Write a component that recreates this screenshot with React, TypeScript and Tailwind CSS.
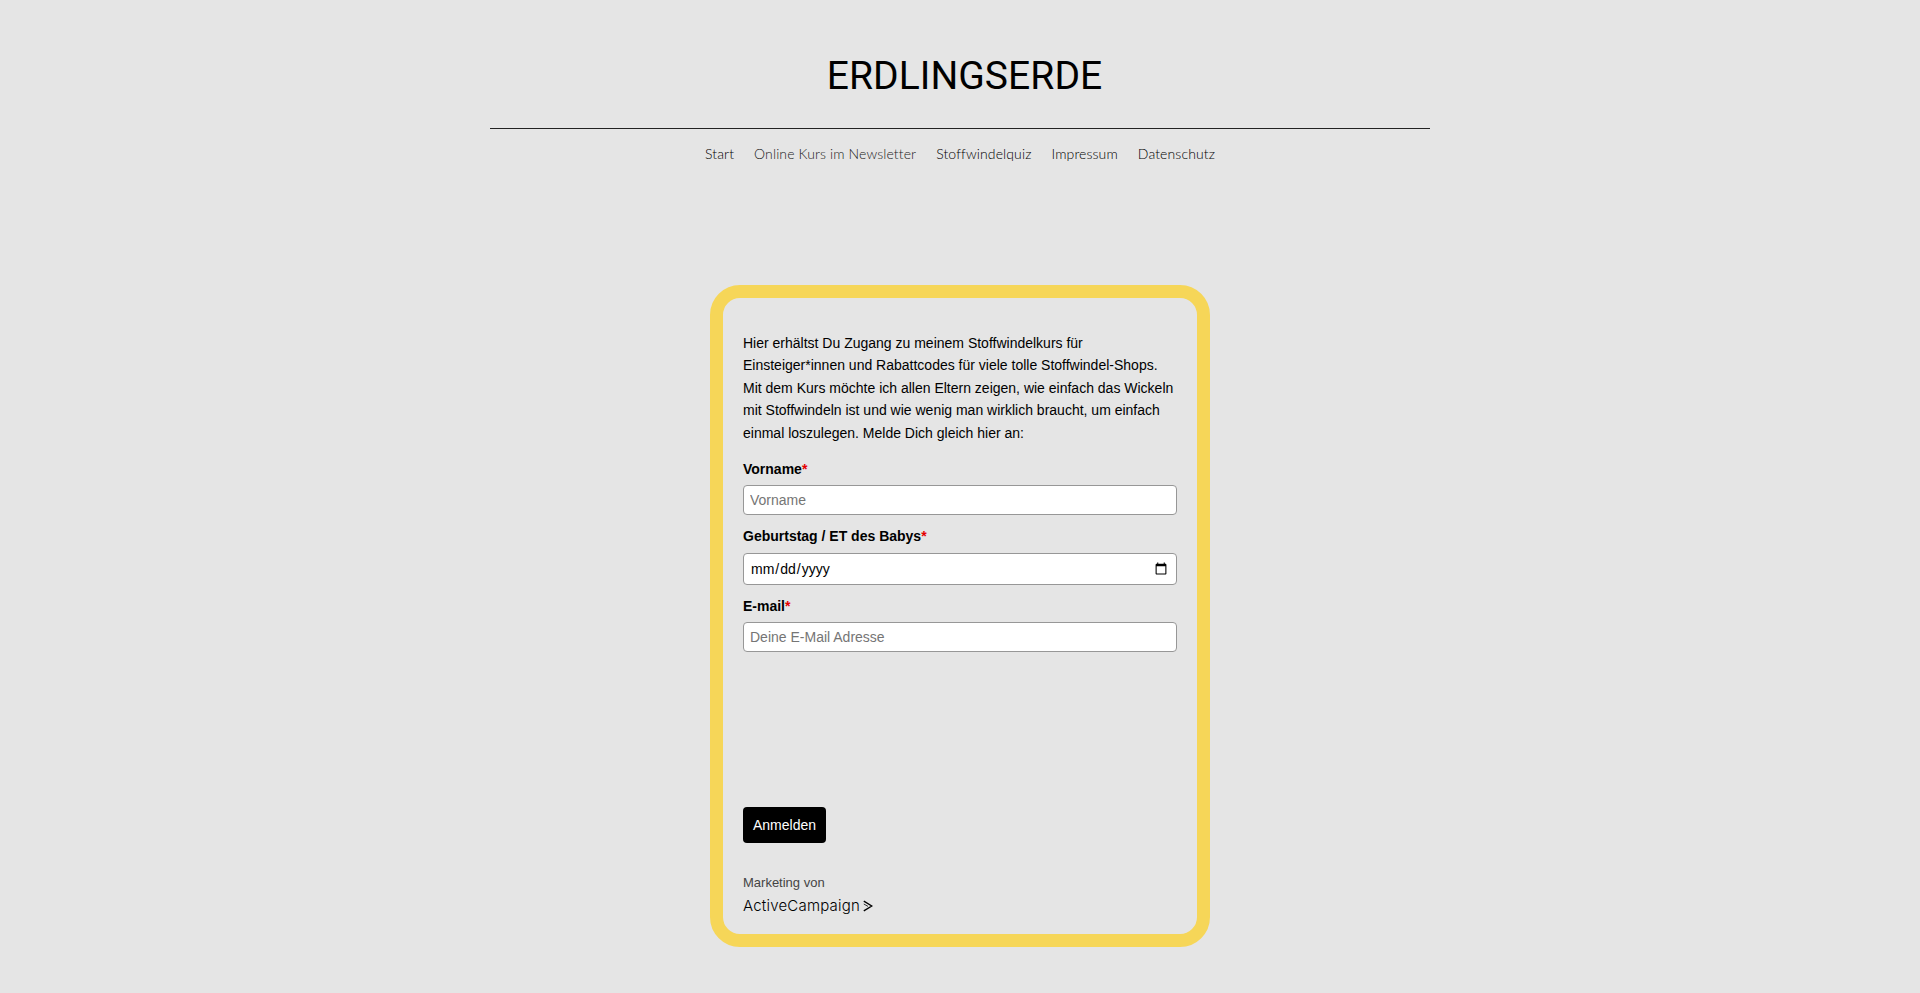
import React from "react";

const nav = [
  { label: "Start", cls: "text-black" },
  { label: "Online Kurs im Newsletter", cls: "text-[#222222]" },
  { label: "Stoffwindelquiz", cls: "text-black" },
  { label: "Impressum", cls: "text-black" },
  { label: "Datenschutz", cls: "text-black" },
];

function Label({ text, className }: { text: string; className: string }) {
  return (
    <label className={`block text-[14px] leading-[18px] font-bold text-black ${className}`}>
      {text}
      <span className="text-[#e40000]">*</span>
    </label>
  );
}

const inputCls =
  "block w-full rounded-[4px] border border-[#979797] bg-white px-[6px] text-[14px] text-black placeholder:text-[#757575] outline-none";

export default function App() {
  return (
    <div className="h-[993px] overflow-hidden bg-[#e5e5e5] flex flex-col items-center font-['Liberation_Sans',Arial,sans-serif]">
      <h1 className="mt-[56px] ml-[9px] text-[39px] leading-[40px] font-normal tracking-[0.05px] text-black font-['Roboto',sans-serif]">
        ERDLINGSERDE
      </h1>
      <div className="mt-[32px] w-[940px] h-[1px] bg-[#222222]" />
      <nav className="mt-[14px] flex gap-[20px] text-[14px] leading-[22px] font-light tracking-[0.12px] font-['Lato',sans-serif]">
        {nav.map((n) => (
          <a key={n.label} className={n.cls}>
            {n.label}
          </a>
        ))}
      </nav>
      <form className="mt-[120px] w-[500px] h-[662px] rounded-[30px] border-[13px] border-[#f6d658] px-[20px] pt-[34px]">
        <p className="text-[14px] leading-[22.4px] text-black">
          Hier erhältst Du Zugang zu meinem Stoffwindelkurs für
          <br />
          Einsteiger*innen und Rabattcodes für viele tolle Stoffwindel-Shops.
          <br />
          Mit dem Kurs möchte ich allen Eltern zeigen, wie einfach das Wickeln
          <br />
          mit Stoffwindeln ist und wie wenig man wirklich braucht, um einfach
          <br />
          einmal loszulegen. Melde Dich gleich hier an:
        </p>
        <Label text="Vorname" className="mt-[16px]" />
        <input className={`${inputCls} mt-[7px] h-[30px]`} placeholder="Vorname" />
        <Label text="Geburtstag / ET des Babys" className="mt-[12px]" />
        <input type="date" className={`${inputCls} mt-[8px] h-[32px]`} />
        <Label text="E-mail" className="mt-[12px]" />
        <input className={`${inputCls} mt-[7px] h-[30px]`} placeholder="Deine E-Mail Adresse" />
        <button
          type="button"
          className="mt-[155px] block h-[36px] w-[83px] rounded-[4px] bg-black text-center text-[14px] text-white"
        >
          Anmelden
        </button>
        <div className="mt-[32px] text-[13px] leading-[16px] text-[#444444]">Marketing von</div>
        <div className="mt-[5px] flex items-center gap-[3px]">
          <span className="text-[15px] leading-[20px] font-light tracking-[0.2px] text-black font-['Inter',sans-serif]">
            ActiveCampaign
          </span>
          <svg width="10" height="12" viewBox="0 0 10 12" fill="none" stroke="#000">
            <path d="M0.8 1.2 L8.8 6 L0.8 10.8" strokeWidth="1.4" />
            <path d="M0.8 4 L5 6.4" strokeWidth="0.8" />
          </svg>
        </div>
      </form>
    </div>
  );
}
